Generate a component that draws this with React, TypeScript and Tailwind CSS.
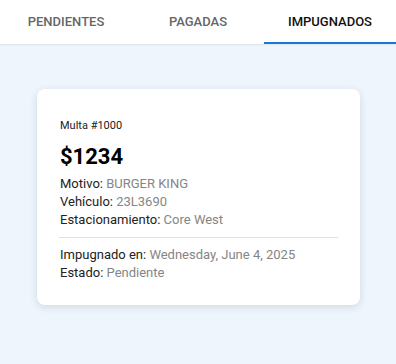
import React from "react";

export default function App() {
  const tabs = ["PENDIENTES", "PAGADAS", "IMPUGNADOS"];
  return (
    <div className="w-[396px] h-[364px] bg-[#eef5fd] font-['Roboto',sans-serif] overflow-hidden">
      <div className="h-[44px] bg-white flex shadow-[0_1px_2px_rgba(0,0,0,0.08)] relative z-10">
        {tabs.map((t, i) => (
          <div
            key={t}
            className={`flex-1 flex items-center justify-center text-[13px] font-medium relative ${
              i === 2 ? "text-[#111]" : "text-[#666]"
            }`}
          >
            {t}
            {i === 2 && <div className="absolute left-0 right-0 bottom-0 h-[2px] bg-[#1976d2]" />}
          </div>
        ))}
      </div>
      <div className="pt-[45px] px-[37px]">
        <div className="w-[323px] h-[216px] bg-white rounded-[8px] shadow-[0_2px_8px_rgba(0,0,0,0.12)] px-[23px] pt-[30px]">
          <div className="text-[11px] leading-[14px] text-[#222]">Multa #1000</div>
          <div className="text-[22px] font-bold leading-[26px] mt-[11px] text-black">$1234</div>
          <div className="text-[13px] leading-[18px] text-[#222] mt-[5px]">
            <div>
              Motivo: <span className="text-[#858585]">BURGER KING</span>
            </div>
            <div>
              Vehículo: <span className="text-[#858585]">23L3690</span>
            </div>
            <div>
              Estacionamiento: <span className="text-[#858585]">Core West</span>
            </div>
          </div>
          <div className="h-px bg-[#e0e0e0] mt-[8px] mr-[-1px] ml-[-1px]" />
          <div className="text-[13px] leading-[18px] text-[#222] mt-[8px]">
            <div>
              Impugnado en: <span className="text-[#858585]">Wednesday, June 4, 2025</span>
            </div>
            <div>
              Estado: <span className="text-[#858585]">Pendiente</span>
            </div>
          </div>
        </div>
      </div>
    </div>
  );
}
